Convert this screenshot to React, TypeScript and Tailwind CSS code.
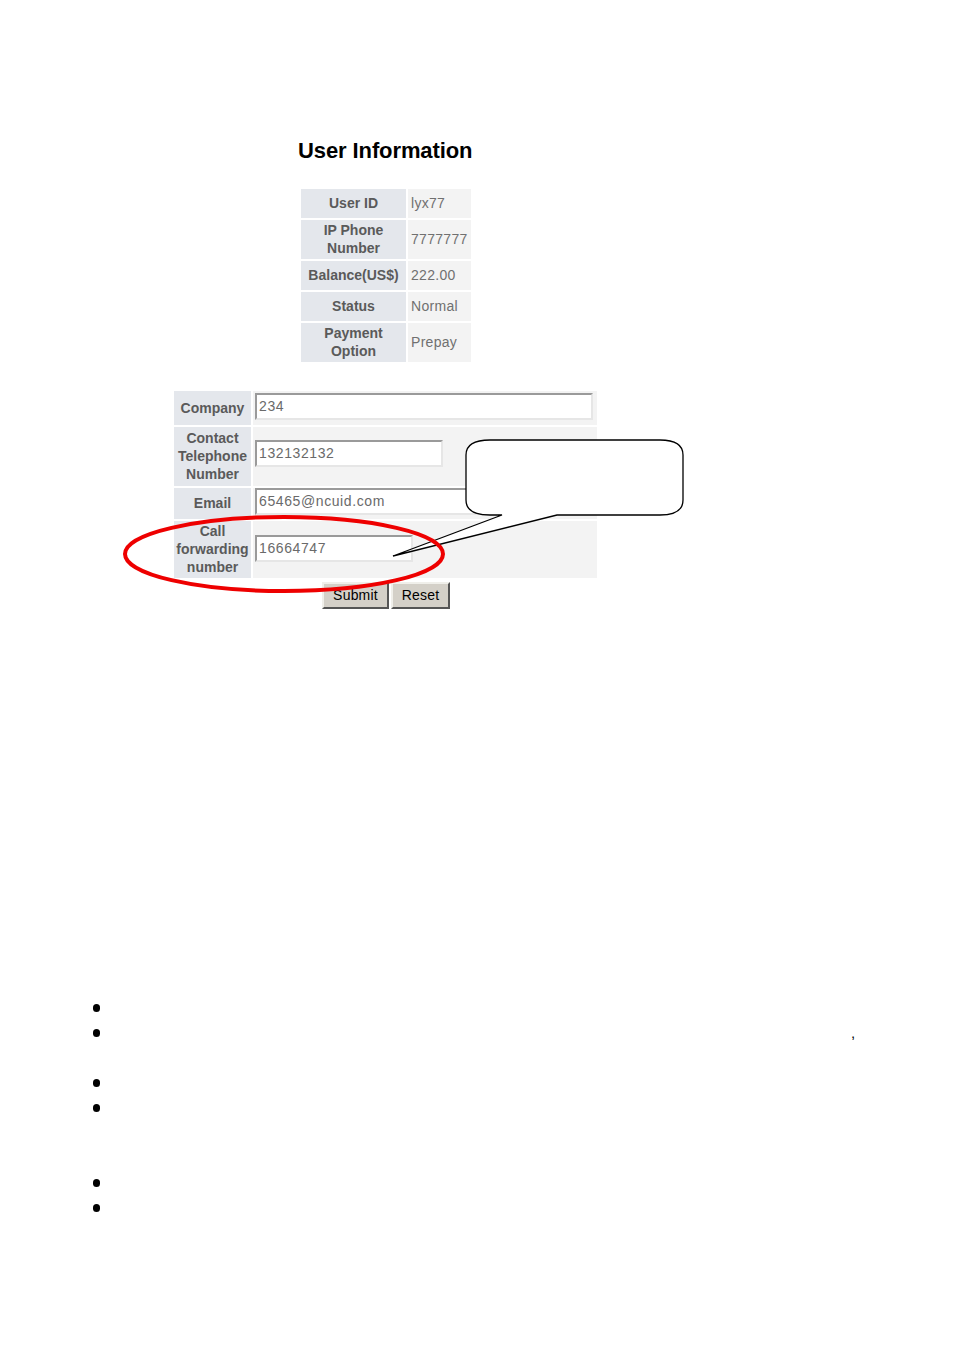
const font = { fontFamily: '"Liberation Sans", Arial, sans-serif' };

const infoRows = [
  { label: ['User ID'], value: 'lyx77', h: 'h-[29px]' },
  { label: ['IP Phone', 'Number'], value: '7777777', h: 'h-[39px]' },
  { label: ['Balance(US$)'], value: '222.00', h: 'h-[29px]' },
  { label: ['Status'], value: 'Normal', h: 'h-[29px]' },
  { label: ['Payment', 'Option'], value: 'Prepay', h: 'h-[39px]' },
];

function Label({ lines, h }: { lines: string[]; h: string }) {
  return (
    <div
      className={`${h} bg-[#e4e7ec] flex flex-col items-center justify-center text-[14px] leading-[18px] font-bold text-[#5a5a5a] pb-[1px]`}
    >
      {lines.map((l) => (
        <span key={l}>{l}</span>
      ))}
    </div>
  );
}

function Field({ value, w }: { value: string; w: string }) {
  return (
    <div
      className={`${w} h-[27px] bg-white border-2 border-t-[#9a9a9a] border-l-[#9a9a9a] border-b-[#e6e6e6] border-r-[#e6e6e6] px-[2px] flex items-center text-[14px] text-[#6a6a6a] tracking-[0.6px] overflow-hidden whitespace-nowrap`}
    >
      {value}
    </div>
  );
}

export default function App() {
  return (
    <div className="relative w-[954px] h-[1351px] bg-white overflow-hidden" style={font}>
      <h1 className="pt-[139px] pl-[298px] text-[22px] leading-[24px] font-bold text-black tracking-[-0.1px]">
        User Information
      </h1>

      {/* account summary */}
      <div className="mt-[26px] ml-[301px] grid grid-cols-[105px_63px] gap-[2px] w-fit">
        {infoRows.map((r) => (
          <div key={r.value} className="contents">
            <Label lines={r.label} h={r.h} />
            <div className={`${r.h} bg-[#f3f3f3] flex items-center pl-[3px] text-[14px] text-[#707070] tracking-[0.3px]`}>
              {r.value}
            </div>
          </div>
        ))}
      </div>

      {/* editable info */}
      <div className="mt-[29px] ml-[174px] grid grid-cols-[77px_344px] gap-[2px] w-fit">
        <Label lines={['Company']} h="h-[34px]" />
        <div className="h-[34px] bg-[#f3f3f3] pl-[2px] pt-[2px]">
          <Field value="234" w="w-[338px]" />
        </div>
        <Label lines={['Contact', 'Telephone', 'Number']} h="h-[59px]" />
        <div className="h-[59px] bg-[#f3f3f3] pl-[2px] pt-[13px]">
          <Field value="132132132" w="w-[188px]" />
        </div>
        <Label lines={['Email']} h="h-[31px]" />
        <div className="h-[31px] bg-[#f3f3f3] pl-[2px]">
          <Field value="65465@ncuid.com" w="w-[260px]" />
        </div>
        <Label lines={['Call', 'forwarding', 'number']} h="h-[57px]" />
        <div className="h-[57px] bg-[#f3f3f3] pl-[2px] pt-[14px]">
          <Field value="16664747" w="w-[158px]" />
        </div>
      </div>

      <div className="mt-[4px] ml-[322px] flex">
        <button className="w-[67px] h-[27px] bg-[#d4d0c8] border-2 border-t-[#f0efea] border-l-[#f0efea] border-b-[#555] border-r-[#555] text-[14px] text-black tracking-[0.2px]">
          Submit
        </button>
        <button className="ml-[2px] w-[59px] h-[27px] bg-[#d4d0c8] border-2 border-t-[#f0efea] border-l-[#f0efea] border-b-[#555] border-r-[#555] text-[14px] text-black tracking-[0.2px]">
          Reset
        </button>
      </div>

      {/* callout + highlight drawn over the screenshot */}
      <svg className="absolute left-0 top-0 pointer-events-none" width="954" height="700">
        <path
          d="M490 440 H660 Q683 440 683 455 V500 Q683 515 660 515 H557 L393 556 L502 515 H490 Q466 515 466 500 V455 Q466 440 490 440 Z"
          fill="white"
          stroke="black"
          strokeWidth="1.3"
        />
        <ellipse cx="284" cy="554" rx="159" ry="37" fill="none" stroke="#ee0000" strokeWidth="4" />
      </svg>

      {/* bullet list with blank entries */}
      <ul className="mt-[386px] ml-[93px] text-[16px] leading-[25px] text-black">
        <li className="flex items-center h-[25px]">
          <span className="w-[7px] h-[8px] rounded-full bg-black" />
        </li>
        <li className="flex items-center h-[25px]">
          <span className="w-[7px] h-[8px] rounded-full bg-black" />
          <span className="ml-[751px] text-[15px] leading-[15px] text-black">,</span>
        </li>
        <li className="h-[25px]" />
        <li className="flex items-center h-[25px]">
          <span className="w-[7px] h-[8px] rounded-full bg-black" />
        </li>
        <li className="flex items-center h-[25px]">
          <span className="w-[7px] h-[8px] rounded-full bg-black" />
        </li>
        <li className="h-[25px]" />
        <li className="h-[25px]" />
        <li className="flex items-center h-[25px]">
          <span className="w-[7px] h-[8px] rounded-full bg-black" />
        </li>
        <li className="flex items-center h-[25px]">
          <span className="w-[7px] h-[8px] rounded-full bg-black" />
        </li>
      </ul>
    </div>
  );
}
